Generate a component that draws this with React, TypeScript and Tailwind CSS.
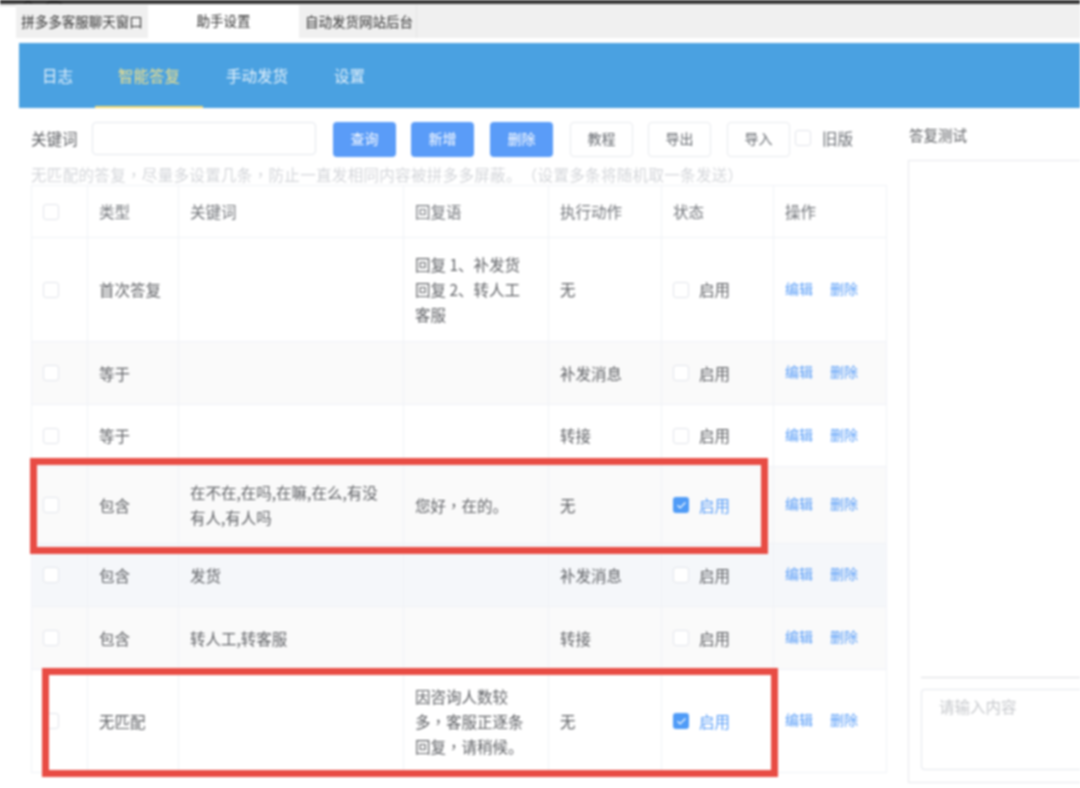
import { Check } from 'lucide-react';

type Row = {
    type: string;
    keyword?: string[];
    reply?: string[];
    action: string;
    on?: boolean;
    h: string;
    bg: string;
};

const rows: Row[] = [
    { type: '首次答复', reply: ['回复 1、补发货', '回复 2、转人工', '客服'], action: '无', h: 'h-[104px]', bg: 'bg-white' },
    { type: '等于', action: '补发消息', h: 'h-[63px]', bg: 'bg-[#fafafa]' },
    { type: '等于', action: '转接', h: 'h-[62px]', bg: 'bg-white' },
    { type: '包含', keyword: ['在不在,在吗,在嘛,在么,有没', '有人,有人吗'], reply: ['您好，在的。'], action: '无', on: true, h: 'h-[77px]', bg: 'bg-[#fafafa]' },
    { type: '包含', keyword: ['发货'], action: '补发消息', h: 'h-[63px]', bg: 'bg-[#f5f7fa]' },
    { type: '包含', keyword: ['转人工,转客服'], action: '转接', h: 'h-[63px]', bg: 'bg-[#fafafa]' },
    { type: '无匹配', reply: ['因咨询人数较', '多，客服正逐条', '回复，请稍候。'], action: '无', on: true, h: 'h-[103px]', bg: 'bg-white' },
];

function Box({ on }: { on?: boolean }) {
    if (on) {
        return (
            <span className="flex h-[16px] w-[16px] shrink-0 items-center justify-center rounded-[3px] bg-[#4f9bf7]">
                <Check size={11} color="#ffffff" strokeWidth={2.5} />
            </span>
        );
    }
    return <span className="block h-[16px] w-[16px] shrink-0 rounded-[3px] border border-[#e2e5eb] bg-white" />;
}

// the commas sit in the middle of their cell in the screenshot, which is how the TC font draws them
function Text({ value }: { value: string }) {
    const parts = value.split('，');
    return (
        <>
            {parts.map((p, i) => (
                <span key={i}>
                    {i > 0 && <span className="font-['Noto_Sans_CJK_TC']">，</span>}
                    {p}
                </span>
            ))}
        </>
    );
}

function Lines({ items }: { items?: string[] }) {
    return <>{items?.map((t) => <div key={t}><Text value={t} /></div>)}</>;
}

const blueBtn = 'flex h-[35px] w-[63px] items-center justify-center rounded-[4px] bg-[#5a9cf8] pb-[2px] text-[14px] text-white';
const plainBtn = 'flex h-[35px] w-[63px] items-center justify-center rounded-[4px] border border-[#e8eaee] bg-white pb-[2px] text-[14px] text-[#666a70]';
const th = 'border border-[#f0f2f7] pl-[11px] text-left font-normal';
const td = 'border border-[#f0f2f7] pl-[11px] align-middle';

export default function App() {
    return (
        <div className="relative h-[788px] w-[1080px] overflow-hidden bg-white font-['Noto_Sans_CJK_SC','Liberation_Sans',sans-serif] text-[15.5px] leading-[25px] text-[#606266] blur-[0.9px]">
            <div className="h-[4px] bg-[#333333]">
                <svg width="70" height="4" className="block" fill="none" stroke="#111111" strokeWidth="1">
                    <path d="M24 4 L28 1 L32 4 M46 4 L50 2 L58 2 L62 4" />
                </svg>
            </div>

            <div className="mt-[1px] flex h-[33px]">
                <div className="h-[1px] w-[16px] bg-[#d0d0d0]" />
                <div className="flex flex-1 bg-[#f0f0f0] text-[13.5px] text-[#333333]">
                    <div className="flex w-[132px] items-center justify-center">拼多多客服聊天窗口</div>
                    <div className="flex w-[151px] items-center justify-center bg-white pb-[3px]">助手设置</div>
                    <div className="flex w-[118px] items-center justify-end border-r border-[#e4e4e4] pr-[3px]">自动发货网站后台</div>
                </div>
            </div>

            <div className="ml-[19px] mt-[5px] flex h-[65px] items-stretch bg-[#4aa1e1] text-[15.5px] text-[#e6f2fb]">
                <div className="ml-[23px] flex items-center">日志</div>
                <div className="ml-[22px] flex w-[108px] items-center justify-center border-b-[2px] border-[#f5d96b] pt-[2px] text-[#f0e08a]">智能答复</div>
                <div className="ml-[23px] flex items-center">手动发货</div>
                <div className="ml-[46px] flex items-center">设置</div>
            </div>

            <div className="flex">
                <div className="ml-[31px] w-[855px] shrink-0">
                    <div className="mt-[14px] flex h-[35px] items-center">
                        <span className="mb-[3px] w-[61px]">关键词</span>
                        <div className="h-[33px] w-[224px] self-start rounded-[4px] border border-[#e4e7ed] bg-white" />
                        <div className={`ml-[17px] ${blueBtn}`}>查询</div>
                        <div className={`ml-[15px] ${blueBtn}`}>新增</div>
                        <div className={`ml-[16px] ${blueBtn}`}>删除</div>
                        <div className={`ml-[17px] ${plainBtn}`}>教程</div>
                        <div className={`ml-[15px] ${plainBtn}`}>导出</div>
                        <div className={`ml-[16px] ${plainBtn}`}>导入</div>
                        <span className="mb-[3px] ml-[5px]"><Box /></span>
                        <span className="mb-[3px] ml-[11px] text-[#666a70]">旧版</span>
                    </div>

                    <div className="mt-[7px] h-[20px] whitespace-nowrap leading-[20px] tracking-[0.33px] text-[#d4d6da] [text-spacing-trim:space-all]">
                        <Text value="无匹配的答复，尽量多设置几条，防止一直发相同内容被拼多多屏蔽。（设置多条将随机取一条发送）" />
                    </div>

                    <table className="mt-[1px] w-[855px] table-fixed border-collapse">
                        <colgroup>
                            <col className="w-[56px]" />
                            <col className="w-[91px]" />
                            <col className="w-[225px]" />
                            <col className="w-[145px]" />
                            <col className="w-[113px]" />
                            <col className="w-[112px]" />
                            <col className="w-[113px]" />
                        </colgroup>
                        <thead>
                            <tr className="h-[52px] text-[#74777c]">
                                <th className={th}><Box /></th>
                                <th className={th}>类型</th>
                                <th className={th}>关键词</th>
                                <th className={th}>回复语</th>
                                <th className={th}>执行动作</th>
                                <th className={th}>状态</th>
                                <th className={th}>操作</th>
                            </tr>
                        </thead>
                        <tbody>
                            {rows.map((r, i) => (
                                <tr key={i} className={`${r.h} ${r.bg}`}>
                                    <td className={td}><Box /></td>
                                    <td className={td}>{r.type}</td>
                                    <td className={td}><Lines items={r.keyword} /></td>
                                    <td className={td}><Lines items={r.reply} /></td>
                                    <td className={td}>{r.action}</td>
                                    <td className={td}>
                                        <div className="flex items-center gap-[10px]">
                                            <Box on={r.on} />
                                            <span className={r.on ? 'text-[#5a9ef8]' : ''}>启用</span>
                                        </div>
                                    </td>
                                    <td className={td}>
                                        <div className="flex gap-[17px] pb-[3px] text-[14px] text-[#5a9ef8]">
                                            <span>编辑</span>
                                            <span>删除</span>
                                        </div>
                                    </td>
                                </tr>
                            ))}
                        </tbody>
                    </table>
                </div>

                <div className="ml-[22px] flex h-[675px] flex-1 flex-col">
                    <div className="mt-[13px] flex h-[27px] items-center pl-[1px] text-[14.5px]">答复测试</div>
                    <div className="mt-[12px] flex h-[623px] flex-col border border-r-0 border-[#e6e8ec] pl-[12px]">
                        <div className="flex-1 border-b border-[#dcdde0]" />
                        <div className="mb-[12px] mt-[11px] h-[81px] rounded-l-[4px] border border-r-0 border-[#e4e7ed] pl-[17px] pt-[4px] text-[#c6c8cc]">请输入内容</div>
                    </div>
                </div>
            </div>

            <div className="absolute left-[30px] top-[458px] h-[96px] w-[738px] border-[7px] border-[#e84c44]" />
            <div className="absolute left-[42px] top-[668px] h-[109px] w-[736px] border-[7px] border-[#e84c44]" />
        </div>
    );
}
